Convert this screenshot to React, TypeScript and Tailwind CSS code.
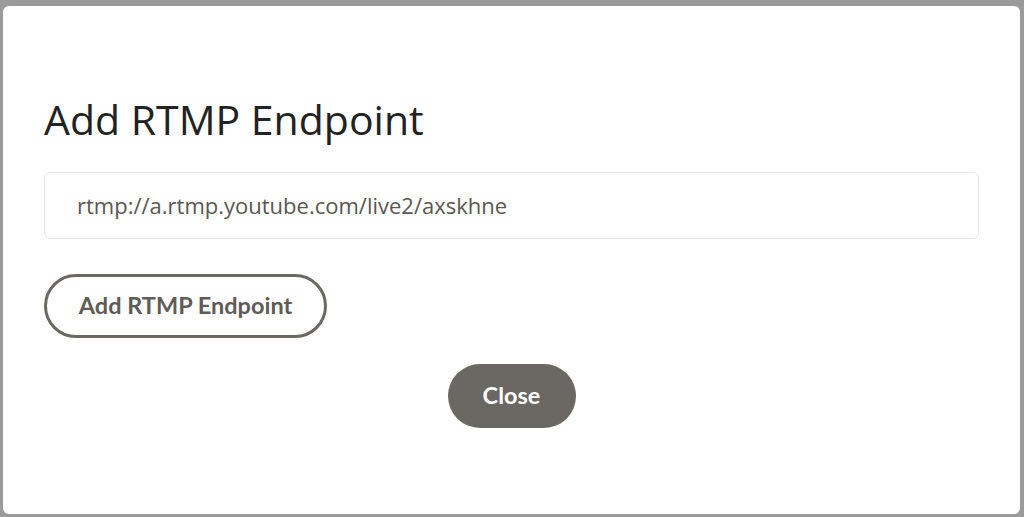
export default function App() {
  return (
    <div className="w-[1024px] h-[517px] bg-[#9b9b9b] overflow-hidden pt-[6px] pl-[3px]">
      <div
        className="w-[1017px] h-[508px] bg-white rounded-[6px] flex flex-col px-[41px] pt-[90px]"
        style={{ fontFamily: "Lato, 'Open Sans', sans-serif" }}
      >
        <h1
          className="text-[41px] leading-[46px] font-medium text-[#222222]"
          style={{ fontFamily: "'Open Sans', sans-serif" }}
        >
          Add RTMP Endpoint
        </h1>
        <div className="mt-[30px] h-[67px] w-[935px] border border-[#e6e5e1] rounded-[6px] flex items-center pl-[32px]">
          <span
            className="text-[22px] text-[#5a5753]"
            style={{ fontFamily: "'Open Sans', sans-serif" }}
          >
            rtmp://a.rtmp.youtube.com/live2/axskhne
          </span>
        </div>
        <div className="mt-[35px]">
          <button className="w-[283px] h-[64px] rounded-full border-[3px] border-[#6b6762] bg-white text-[23.5px] font-bold text-[#5f5b57] flex items-center justify-center">
            Add RTMP Endpoint
          </button>
        </div>
        <div className="mt-[26px] flex justify-center">
          <button className="w-[128px] h-[64px] rounded-full bg-[#6b6762] text-white text-[23.5px] font-bold flex items-center justify-center">
            Close
          </button>
        </div>
      </div>
    </div>
  );
}
